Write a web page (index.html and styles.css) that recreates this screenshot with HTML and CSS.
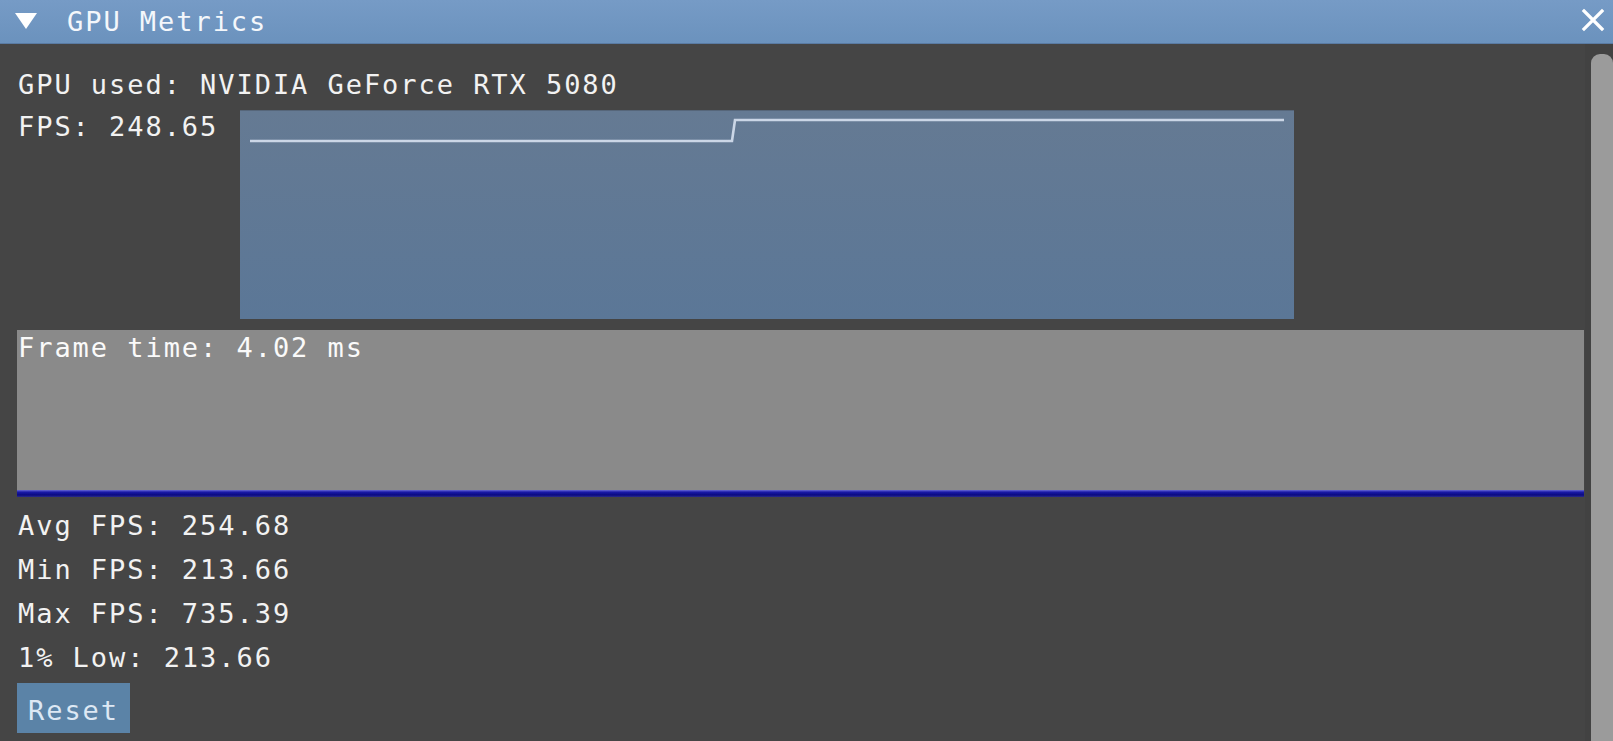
FILE: index.html
```html
<!DOCTYPE html>
<html>
<head>
<meta charset="utf-8">
<link rel="stylesheet" href="styles.css">
</head>
<body>
<div class="window">
  <div class="titlebar">
    <svg class="collapse" width="24" height="18" viewBox="0 0 24 18"><polygon points="1,1 23,1 12,17" fill="#ffffff"/></svg>
    <span class="title">GPU Metrics</span>
    <svg class="close" width="24" height="24" viewBox="0 0 24 24"><path d="M3 3 L21 21 M21 3 L3 21" stroke="#ffffff" stroke-width="3.2" stroke-linecap="square"/></svg>
  </div>
  <div class="body">
    <div class="content">
      <div class="line first">GPU used: NVIDIA GeForce RTX 5080</div>
      <div class="fps-row">
        <div class="fps-label">FPS: 248.65</div>
        <div class="plot">
          <svg width="1054" height="209" viewBox="0 0 1054 209">
            <polyline points="10,31 492,31 495,10 1044,10" fill="none" stroke="#cbd6e6" stroke-width="2.6"/>
          </svg>
        </div>
      </div>
      <div class="frametime">
        <div class="ft-label">Frame time: 4.02 ms</div>
        <div class="ft-line"></div>
      </div>
      <div class="stats">
        <div class="stat">Avg FPS: 254.68</div>
        <div class="stat">Min FPS: 213.66</div>
        <div class="stat">Max FPS: 735.39</div>
        <div class="stat">1% Low: 213.66</div>
      </div>
      <button class="reset">Reset</button>
    </div>
    <div class="scrollbar"><div class="thumb"></div></div>
  </div>
</div>
</body>
</html>
```

FILE: styles.css
```css
html, body {
  margin: 0;
  padding: 0;
  width: 1613px;
  height: 741px;
  overflow: hidden;
  background: #454545;
}

.window {
  display: flex;
  flex-direction: column;
  height: 741px;
  font-family: "DejaVu Sans Mono", "Liberation Mono", monospace;
  font-size: 27px;
  letter-spacing: 1.95px;
  color: #f2f2f2;
}

.titlebar {
  height: 43px;
  flex: none;
  display: flex;
  align-items: center;
  background: linear-gradient(#769bc6, #6b92bd);
  border-bottom: 1px solid #5a7ba3;
  position: relative;
}

.collapse {
  margin-left: 14px;
  margin-top: -2px;
}

.title {
  margin-left: 29px;
  line-height: 43px;
  color: #f4f7fb;
}

.close {
  position: absolute;
  right: 8px;
  top: 8px;
}

.body {
  flex: 1;
  display: flex;
  min-height: 0;
}

.content {
  flex: 1;
  padding: 21px 1px 0 17px;
  display: flex;
  flex-direction: column;
  align-items: flex-start;
}

.line {
  line-height: 40px;
  padding-left: 1px;
}

.fps-row {
  display: flex;
  align-items: flex-start;
  align-self: stretch;
}

.fps-label {
  width: 222px;
  flex: none;
  line-height: 40px;
  padding-top: 2px;
  padding-left: 1px;
}

.plot {
  margin-top: 5px;
  width: 1054px;
  height: 209px;
  background: linear-gradient(#657a93, #5b7797);
  box-shadow: inset 0 1px 0 #56667a;
}

.plot svg {
  display: block;
}

.frametime {
  align-self: stretch;
  margin-top: 11px;
  display: flex;
  flex-direction: column;
}

.ft-label {
  height: 160px;
  background: #8a8a8a;
  line-height: 31px;
  padding: 2px 0 0 1px;
  box-sizing: border-box;
  color: #fafafa;
}

.ft-line {
  height: 7px;
  background: linear-gradient(#6a6ad6, #1a1aa8 30%, #0a0a82 70%, #2b2b8c);
}

.stats {
  margin-top: 7px;
  padding-left: 1px;
}

.stat {
  line-height: 44px;
}

.reset {
  margin-top: 3px;
  width: 113px;
  height: 50px;
  padding: 5px 0 0 0;
  border: none;
  background: #5b83a7;
  color: #dde8f4;
  font: inherit;
  letter-spacing: 1.95px;
  line-height: 44px;
  text-align: center;
}

.scrollbar {
  width: 28px;
  flex: none;
  padding-left: 6px;
  padding-top: 10px;
  box-sizing: border-box;
  background: #424242;
}

.thumb {
  height: 100%;
  background: #9b9b9b;
  border-radius: 9px 9px 0 0;
}
```
